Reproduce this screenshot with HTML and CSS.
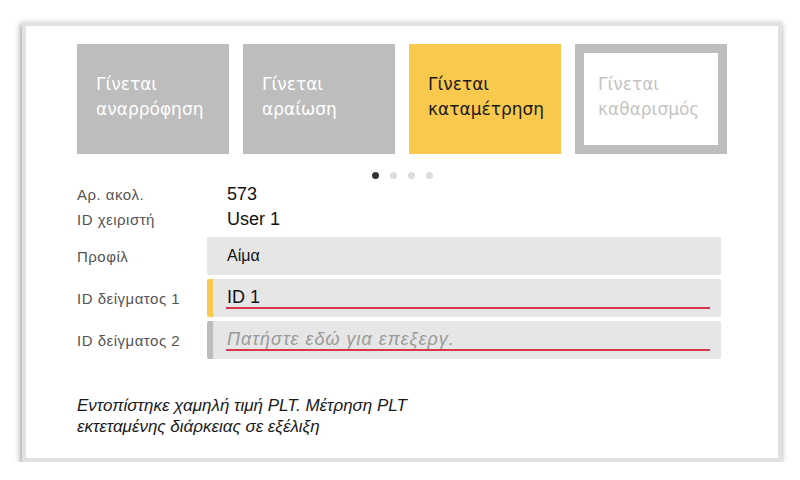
FILE: index.html
```html
<!DOCTYPE html>
<html lang="el">
<head>
<meta charset="utf-8">
<link rel="stylesheet" href="styles.css">
</head>
<body>
<div class="frame">
  <div class="steps">
    <div class="step step-done">Γίνεται<br>αναρρόφηση</div>
    <div class="step step-done">Γίνεται<br>αραίωση</div>
    <div class="step step-active">Γίνεται<br>καταμέτρηση</div>
    <div class="step step-next">Γίνεται<br>καθαρισμός</div>
  </div>
  <div class="dots">
    <span class="dot dot-on"></span>
    <span class="dot"></span>
    <span class="dot"></span>
    <span class="dot"></span>
  </div>
  <div class="info">
    <div class="info-label">Αρ. ακολ.</div>
    <div class="info-value">573</div>
    <div class="info-label">ID χειριστή</div>
    <div class="info-value">User 1</div>
  </div>
  <div class="fields">
    <div class="field-label">Προφίλ</div>
    <div class="field field-plain"><span class="field-text">Αίμα</span></div>
    <div class="field-label">ID δείγματος 1</div>
    <div class="field field-focus"><div class="field-input">ID 1</div></div>
    <div class="field-label">ID δείγματος 2</div>
    <div class="field field-idle"><div class="field-input field-placeholder">Πατήστε εδώ για επεξεργ.</div></div>
  </div>
  <p class="message">Εντοπίστηκε χαμηλή τιμή PLT. Μέτρηση PLT<br>εκτεταμένης διάρκειας σε εξέλιξη</p>
</div>
</body>
</html>
```

FILE: styles.css
```css
html, body {
  margin: 0;
  padding: 0;
  background: #ffffff;
}
body {
  font-family: "Liberation Sans", Arial, sans-serif;
}
.frame {
  box-sizing: border-box;
  margin: 22px 0 0 22px;
  width: 760px;
  height: 440px;
  border: 4px solid #e2e2e2;
  box-shadow: -1px 2px 6px rgba(0, 0, 0, 0.45);
  background: #ffffff;
  padding: 18px 0 0 51px;
}
.steps {
  display: flex;
  gap: 14px;
  width: 650px;
}
.step {
  box-sizing: border-box;
  width: 152px;
  height: 110px;
  padding: 28px 0 0 19px;
  font-family: "DejaVu Sans", sans-serif;
  font-size: 17px;
  line-height: 25px;
}
.step-done {
  background: #bdbdbd;
  color: #ffffff;
}
.step-active {
  background: #f9c94e;
  color: #1a1a1a;
}
.step-next {
  background: #ffffff;
  border: 9px solid #bdbdbd;
  padding: 19px 0 0 14px;
  color: #c4c4c4;
}
.dots {
  display: flex;
  justify-content: center;
  gap: 11px;
  width: 650px;
  margin-top: 18px;
  height: 7px;
}
.dot {
  width: 7px;
  height: 7px;
  border-radius: 50%;
  background: #dcdcdc;
}
.dot-on {
  background: #333333;
}
.info {
  display: grid;
  grid-template-columns: 150px 1fr;
  grid-auto-rows: 25px;
  margin-top: 3px;
  align-items: center;
}
.info-label {
  font-size: 15px;
  letter-spacing: 0.5px;
  color: #555555;
  line-height: 25px;
}
.info-value {
  font-size: 18px;
  color: #111111;
  line-height: 25px;
}
.fields {
  display: grid;
  grid-template-columns: 130px 514px;
  grid-auto-rows: 38px;
  row-gap: 4px;
  margin-top: 5px;
  align-items: center;
}
.field-label {
  font-size: 15px;
  letter-spacing: 0.5px;
  color: #555555;
}
.field {
  box-sizing: border-box;
  height: 38px;
  background: #e6e6e6;
  border-radius: 2px;
}
.field-plain {
  display: flex;
  align-items: center;
  padding-left: 20px;
}
.field-text {
  font-size: 16px;
  color: #111111;
}
.field-focus,
.field-idle {
  padding: 8px 11px 0 13px;
  border-left: 6px solid #f9c94e;
}
.field-idle {
  border-left-color: #bdbdbd;
}
.field-input {
  font-size: 18px;
  line-height: 20px;
  color: #111111;
  border-bottom: 2px solid #d8364a;
  padding-left: 1px;
}
.field-placeholder {
  font-style: italic;
  letter-spacing: 1px;
  color: #9a9a9a;
}
.message {
  margin: 36px 0 0 0;
  font-size: 17px;
  line-height: 21px;
  font-style: italic;
  color: #1a1a1a;
}
```
